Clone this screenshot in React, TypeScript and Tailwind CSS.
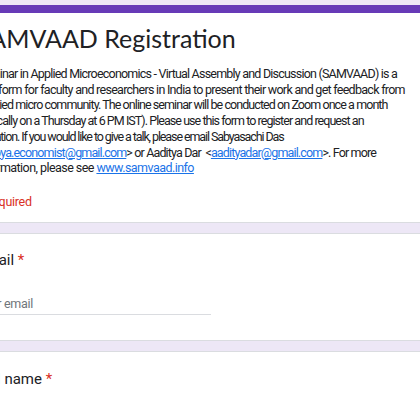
import React from "react";

const link = "text-[#1a73e8] underline";

// each line of the description, with its own spacing so the widths match
const lines: { text: React.ReactNode; cls: string }[] = [
  {
    text: "Seminar in Applied Microeconomics - Virtual Assembly and Discussion (SAMVAAD) is a",
    cls: "tracking-[-0.79px]",
  },
  {
    text: "platform for faculty and researchers in India to present their work and get feedback from",
    cls: "tracking-[-0.72px] ml-[3px]",
  },
  {
    text: "applied micro community. The online seminar will be conducted on Zoom once a month",
    cls: "tracking-[-0.93px] ml-[2px]",
  },
  {
    text: "(typically on a Thursday at 6 PM IST). Please use this form to register and request an",
    cls: "tracking-[-0.95px]",
  },
  {
    text: "invitation. If you would like to give a talk, please email Sabyasachi Das",
    cls: "tracking-[-1.1px]",
  },
  {
    text: (
      <>
        &lt;<span className={link}>sabya.economist@gmail.com</span>&gt; or Aaditya Dar  &lt;
        <span className={link}>aadityadar@gmail.com</span>&gt;. For more
      </>
    ),
    cls: "tracking-[-0.85px]",
  },
  {
    text: (
      <>
        information, please see <span className={link}>www.samvaad.info</span>
      </>
    ),
    cls: "tracking-[-0.55px]",
  },
];

function Card({ children, top }: { children: React.ReactNode; top?: boolean }) {
  return (
    <div
      className={
        "bg-white border border-[#dadce0] rounded-lg px-[36px] " +
        (top ? "border-t-[8px] border-t-[#673ab7]" : "")
      }
    >
      {children}
    </div>
  );
}

export default function App() {
  return (
    <div
      className="w-[420px] h-[420px] overflow-hidden bg-[#ede7f6] text-[#202124]"
      style={{ fontFamily: "Roboto, 'Liberation Sans', sans-serif" }}
    >
      <div className="ml-[-60px] w-[560px] pt-[5px] flex flex-col gap-[10px]">
        <Card top>
          <h1
            className="pt-[9px] ml-[-1px] text-[25px] leading-[32px] text-[#202124] whitespace-nowrap"
            style={{ fontFamily: "Lato, sans-serif" }}
          >
            SAMVAAD Registration
          </h1>
          <div className="mt-[12px] text-[12.5px] leading-[15.7px] whitespace-pre">
            {lines.map((l, i) => (
              <div key={i} className={l.cls}>
                {l.text}
              </div>
            ))}
          </div>
          <div className="mt-[18px] pb-[12px] text-[12.5px] leading-[16px] tracking-[-0.3px] text-[#d93025]">
            * Required
          </div>
        </Card>

        <Card>
          <div className="pt-[14px] text-[15px] leading-[24px]">
            Email <span className="text-[#d93025]">*</span>
          </div>
          <div className="mt-[22px] w-[234px] border-b border-[#dadce0] text-[12.5px] leading-[20px] tracking-[-0.3px] text-[#70757a]">
            Your email
          </div>
          <div className="h-[25px]" />
        </Card>

        <Card>
          <div className="pt-[15px] text-[15px] leading-[24px]">
            Full name <span className="text-[#d93025]">*</span>
          </div>
          <div className="mt-[22px] w-[234px] border-b border-[#dadce0] text-[12.5px] leading-[20px] tracking-[-0.3px] text-[#70757a]">
            Your answer
          </div>
          <div className="h-[25px]" />
        </Card>
      </div>
    </div>
  );
}
